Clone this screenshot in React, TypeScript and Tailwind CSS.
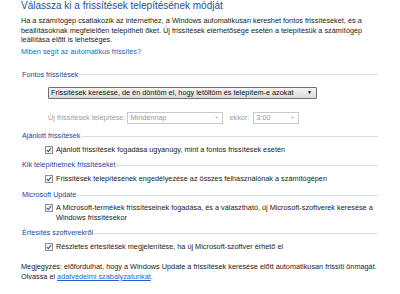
import React from "react";

const font = { fontFamily: '"Liberation Sans", Arial, sans-serif' };

const SectionHeader = ({ text }: { text: string }) => (
  <div className="flex items-center h-[10px] leading-[10px] pl-px">
    <span className="text-[7.2px] text-[#1e3f9c] whitespace-nowrap">{text}</span>
    <div className="flex-1 h-px bg-[#d5dfe5] ml-px" />
  </div>
);

const Check = () => (
  <div className="w-[8px] h-[8px] shrink-0 border border-[#8e8f8f] bg-[#f4f4f4] flex items-center justify-center mt-px">
    <svg width="6" height="6" viewBox="0 0 6 6">
      <path d="M0.8 3.1 L2.4 4.7 L5.2 1" fill="none" stroke="#4a5f97" strokeWidth="1.2" />
    </svg>
  </div>
);

const CheckRow = ({ lines }: { lines: string[] }) => (
  <div className="flex items-start pl-[24px] gap-[3px]">
    <Check />
    <div className="text-[7.3px] leading-[10px] text-[#1a1a1a]">
      {lines.map((l) => (
        <div key={l} className="whitespace-nowrap">{l}</div>
      ))}
    </div>
  </div>
);

const DisabledSelect = ({ value, width }: { value: string; width: string }) => (
  <div className={`${width} h-[12px] shrink-0 border border-[#c5c9cc] bg-white flex items-center justify-between pl-[2px] pr-[4px]`}>
    <span className="text-[7.3px] text-[#9a9a9a]">{value}</span>
    <span className="text-[4px] text-[#b0b0b0]">▼</span>
  </div>
);

export default function App() {
  return (
    <div className="w-[400px] h-[294px] bg-white overflow-hidden pl-[21px] pr-[22px]" style={font}>
      <div className="h-[12px] leading-[12px] text-[10px] text-[#1e4ba0] whitespace-nowrap">
        Válassza ki a frissítések telepítésének módját
      </div>

      <div className="mt-[4px] text-[7.3px] leading-[9.5px] text-[#1a1a1a]">
        <div className="whitespace-nowrap">Ha a számítógép csatlakozik az internethez, a Windows automatikusan kereshet fontos frissítéseket, és a</div>
        <div className="whitespace-nowrap">beállításoknak megfelelően telepítheti őket. Új frissítések elérhetősége esetén a telepítésük a számítógép</div>
        <div className="whitespace-nowrap">leállítása előtt is lehetséges.</div>
      </div>

      <div className="mt-[2.5px] h-[10px] leading-[10px] text-[7.3px] text-[#1f66c8]">
        Miben segít az automatikus frissítés?
      </div>

      <div className="mt-[12.5px]">
        <SectionHeader text="Fontos frissítések" />
      </div>

      <div className="mt-[7.5px] ml-[27px] w-[269px] h-[12px] border border-[#707070] rounded-[1px] bg-gradient-to-b from-[#f4f4f4] to-[#dcdcdc] flex items-center justify-between pl-[2px] pr-[4px]">
        <span className="text-[7.3px] text-[#111] whitespace-nowrap">Frissítések keresése, de én döntöm el, hogy letöltöm és telepítem-e azokat</span>
        <span className="text-[5px] text-black">▼</span>
      </div>

      <div className="mt-[13px] ml-[27px] flex items-center h-[12px]">
        <span className="text-[7.3px] text-[#a0a0a0] mr-[2px] whitespace-nowrap">Új frissítések telepítése:</span>
        <DisabledSelect value="Mindennap" width="w-[96px]" />
        <span className="text-[7.3px] text-[#a0a0a0] ml-[6px] mr-[4px]">ekkor:</span>
        <DisabledSelect value="3:00" width="w-[46px]" />
      </div>

      <div className="mt-[7px]">
        <SectionHeader text="Ajánlott frissítések" />
      </div>
      <div className="mt-[3.5px]">
        <CheckRow lines={["Ajánlott frissítések fogadása ugyanúgy, mint a fontos frissítések esetén"]} />
      </div>

      <div className="mt-[5.5px]">
        <SectionHeader text="Kik telepíthetnek frissítéseket" />
      </div>
      <div className="mt-[4px]">
        <CheckRow lines={["Frissítések telepítésének engedélyezése az összes felhasználónak a számítógépen"]} />
      </div>

      <div className="mt-[6px]">
        <SectionHeader text="Microsoft Update" />
      </div>
      <div className="mt-[3px]">
        <CheckRow
          lines={[
            "A Microsoft-termékek frissítéseinek fogadása, és a választható, új Microsoft-szoftverek keresése a",
            "Windows frissítésekor",
          ]}
        />
      </div>

      <div className="mt-[5px]">
        <SectionHeader text="Értesítés szoftverekről" />
      </div>
      <div className="mt-[4px]">
        <CheckRow lines={["Részletes értesítések megjelenítése, ha új Microsoft-szoftver érhető el"]} />
      </div>

      <div className="mt-[10px] text-[7.3px] leading-[9.5px] text-[#1a1a1a]">
        <div className="whitespace-nowrap">Megjegyzés: előfordulhat, hogy a Windows Update a frissítések keresése előtt automatikusan frissíti önmagát.</div>
        <div className="whitespace-nowrap">
          Olvassa el <span className="text-[#1f66c8] underline">adatvédelmi szabályzatunkat</span>.
        </div>
      </div>
    </div>
  );
}
